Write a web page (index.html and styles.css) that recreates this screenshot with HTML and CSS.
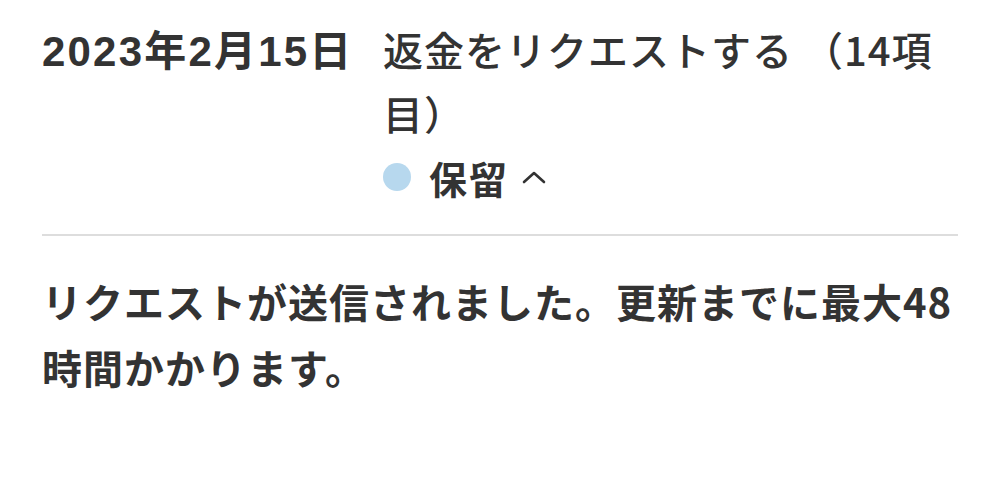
FILE: index.html
```html
<!DOCTYPE html>
<html lang="ja">
<head>
<meta charset="utf-8">
<title>返金リクエスト</title>
<link rel="stylesheet" href="styles.css">
</head>
<body>
<main class="order">
  <section class="order-row">
    <div class="order-date">2023年2月15日</div>
    <div class="order-info">
      <div class="order-title">返金をリクエストする （14項目）</div>
      <div class="order-status">
        <span class="status-dot"></span>
        <span class="status-label">保留</span>
        <svg class="chevron" width="26" height="16" viewBox="0 0 26 16" aria-hidden="true">
          <path d="M3 13 L13 4 L23 13" fill="none" stroke="#333" stroke-width="2.6" stroke-linecap="round" stroke-linejoin="round"/>
        </svg>
      </div>
    </div>
  </section>
  <hr class="divider">
  <p class="note">リクエストが送信されました。更新までに最大48時間かかります。</p>
</main>
</body>
</html>
```
FILE: styles.css
```css
html, body {
  margin: 0;
  background: #ffffff;
}

body {
  font-family: "Noto Sans CJK JP", "Noto Sans", sans-serif;
  color: #333333;
}

.order {
  padding: 17px 41px 0 42px;
}

.order-row {
  display: flex;
  align-items: baseline;
  gap: 31px;
}

.order-date {
  flex: none;
  width: 310px;
  font-family: "Liberation Sans", "Noto Sans CJK JP", sans-serif;
  font-size: 42px;
  font-weight: 700;
  line-height: 64px;
  letter-spacing: 2.2px;
  white-space: nowrap;
}

.order-info {
  flex: 1;
  min-width: 0;
}

.order-title {
  font-size: 40px;
  font-weight: 500;
  line-height: 64px;
  letter-spacing: 1px;
}

.order-status {
  display: flex;
  align-items: center;
  height: 64px;
  font-size: 38px;
  font-weight: 700;
}

.status-dot {
  width: 28px;
  height: 28px;
  border-radius: 50%;
  background: #b7d8ee;
  margin-right: 18px;
}

.status-label {
  letter-spacing: 2px;
}

.chevron {
  margin-left: 12px;
}

.divider {
  margin: 25px 0 0;
  border: 0;
  height: 2px;
  background: #dddddd;
}

.note {
  margin: 32px 0 0;
  font-size: 40px;
  font-weight: 700;
  line-height: 66px;
  letter-spacing: 1px;
}
```
